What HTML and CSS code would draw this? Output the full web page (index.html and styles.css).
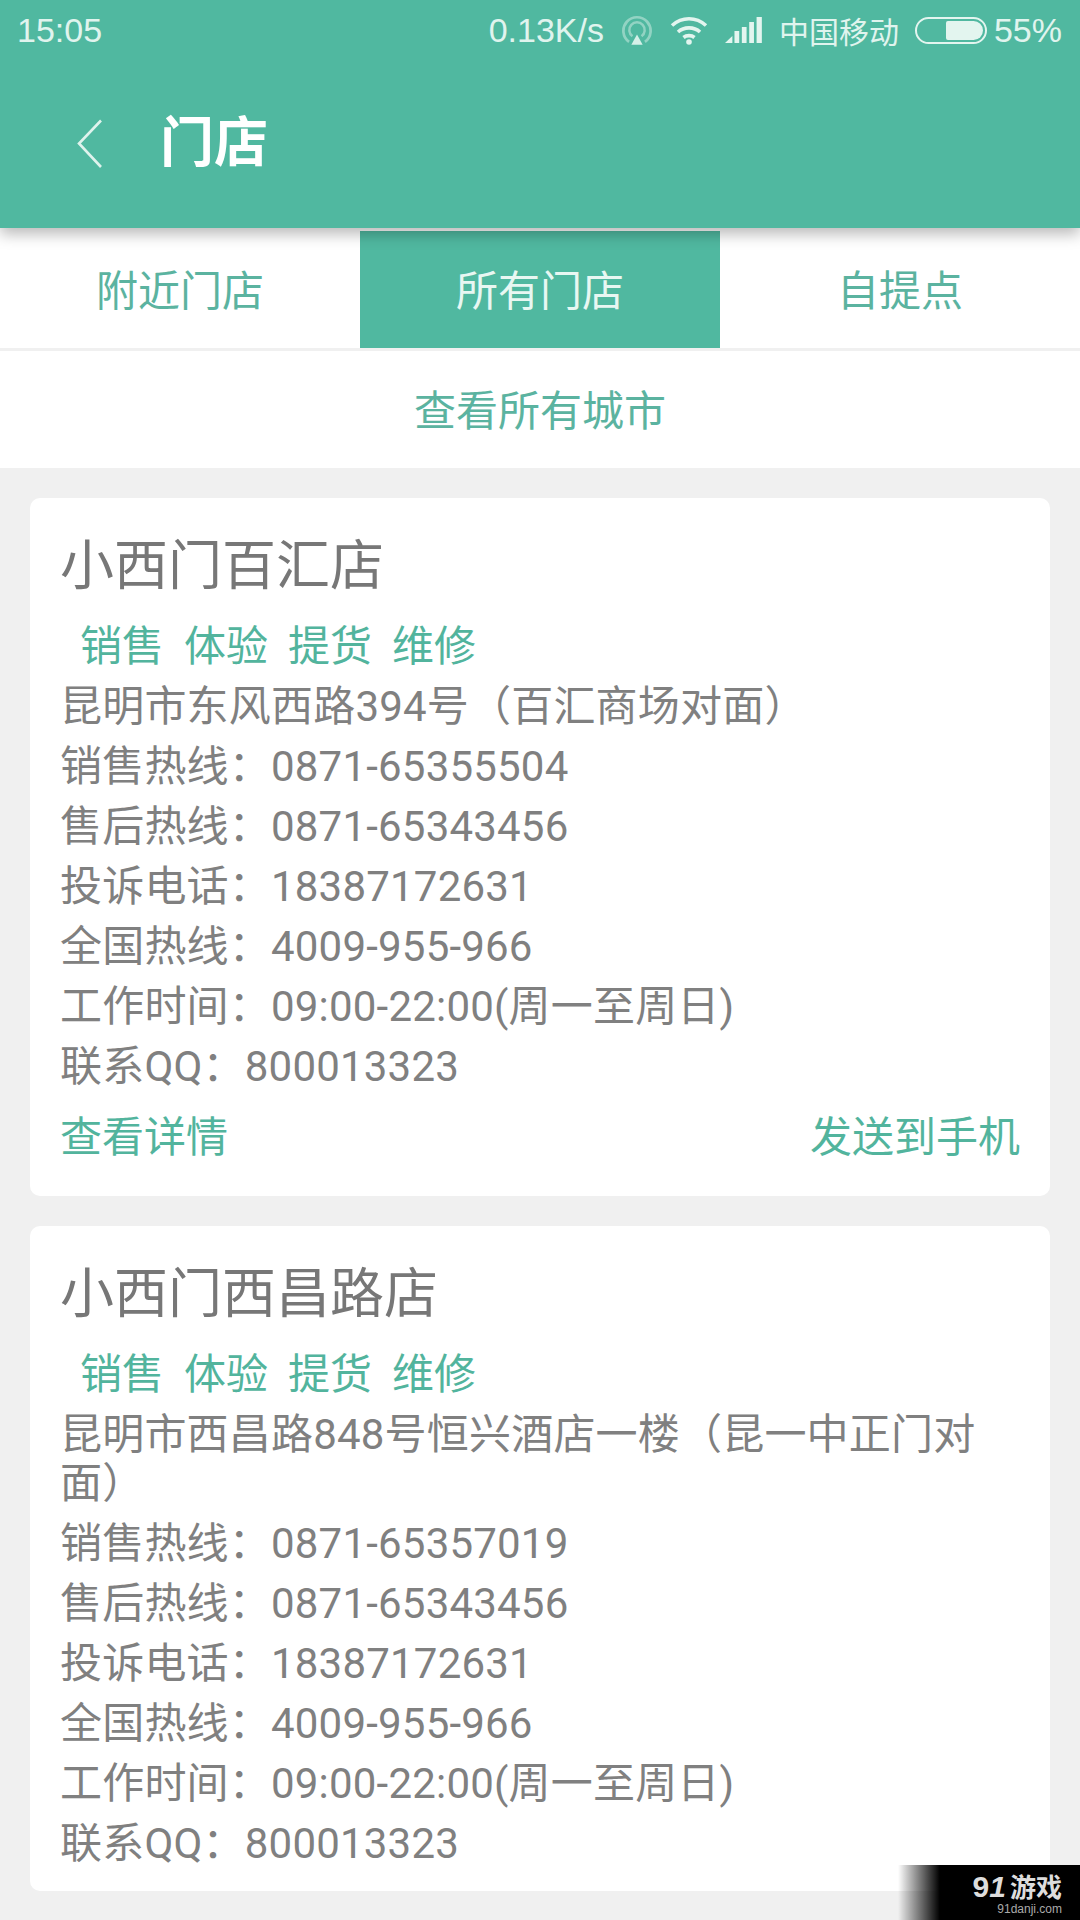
FILE: index.html
```html
<!DOCTYPE html>
<html lang="zh-CN">
<head>
<meta charset="utf-8">
<title>门店</title>
<link rel="stylesheet" href="styles.css">
</head>
<body>
<div class="page">
  <header class="appbar">
    <div class="status">
      <span class="time">15:05</span>
      <div class="status-right">
        <span class="speed">0.13K/s</span>
        <svg class="ic-hotspot" width="30" height="34" viewBox="0 0 26 30" fill="none" stroke="#b5e2d5" stroke-opacity=".65">
          <path d="M6 25.5A12 12 0 1 1 20 25.5" stroke-width="2.4"/>
          <path d="M9 20.5A6.8 6.8 0 1 1 17 20.5" stroke-width="2.2"/>
          <path d="M13 19l5 9H8z" fill="#d5f0e8" stroke="none"/>
        </svg>
        <svg class="ic-wifi" width="38" height="30" viewBox="0 0 38 30" fill="none" stroke="#e3f5ef" stroke-width="3.6">
          <path d="M2 10.5C12 1.500 26 1.500 36 10.500"/>
          <path d="M8 17C14 11.500 24 11.500 30 17"/>
          <path d="M13.500 22.500C16.500 20 21.500 20 24.500 22.500"/>
          <circle cx="19" cy="27" r="2.800" fill="#e3f5ef" stroke="none"/>
        </svg>
        <svg class="ic-signal" width="40" height="28" viewBox="0 0 38 28" fill="#e3f5ef" preserveAspectRatio="none">
          <path d="M0 27 7 20v7z"/>
          <rect x="9" y="15" width="4.500" height="12"/>
          <rect x="16" y="11" width="4.500" height="16"/>
          <rect x="23" y="6" width="4.500" height="21"/>
          <rect x="30" y="1" width="5" height="26"/>
        </svg>
        <span class="carrier">中国移动</span>
        <div class="battery"><div class="battery-fill"></div></div>
        <span class="percent">55%</span>
      </div>
    </div>
    <div class="titlebar">
      <svg class="back" width="26" height="50" viewBox="0 0 26 50" fill="none" stroke="#dff3ed" stroke-width="2.600">
        <path d="M24 1.500 2 24.500 24 48"/>
      </svg>
      <h1 class="title">门店</h1>
    </div>
  </header>

  <nav class="tabs">
    <div class="tab">附近门店</div>
    <div class="tab tab-active">所有门店</div>
    <div class="tab">自提点</div>
  </nav>
  <div class="city">查看所有城市</div>

  <main class="list">
    <section class="card">
      <h2 class="name">小西门百汇店</h2>
      <div class="tags"><span>销售</span><span>体验</span><span>提货</span><span>维修</span></div>
      <p class="row">昆明市东风西路394号（百汇商场对面）</p>
      <p class="row">销售热线：0871-65355504</p>
      <p class="row">售后热线：0871-65343456</p>
      <p class="row">投诉电话：18387172631</p>
      <p class="row">全国热线：4009-955-966</p>
      <p class="row">工作时间：09:00-22:00(周一至周日)</p>
      <p class="row">联系QQ：800013323</p>
      <div class="actions"><span>查看详情</span><span>发送到手机</span></div>
    </section>
    <section class="card">
      <h2 class="name">小西门西昌路店</h2>
      <div class="tags"><span>销售</span><span>体验</span><span>提货</span><span>维修</span></div>
      <p class="row">昆明市西昌路848号恒兴酒店一楼（昆一中正门对面）</p>
      <p class="row">销售热线：0871-65357019</p>
      <p class="row">售后热线：0871-65343456</p>
      <p class="row">投诉电话：18387172631</p>
      <p class="row">全国热线：4009-955-966</p>
      <p class="row">工作时间：09:00-22:00(周一至周日)</p>
      <p class="row">联系QQ：800013323</p>
    </section>
  </main>

  <div class="watermark">
    <div class="wm-logo"><b class="wm-num">9<i>1</i></b>游戏</div>
    <div class="wm-url">91danji.com</div>
  </div>
</div>
</body>
</html>
```

FILE: styles.css
```css
* { box-sizing: border-box; }
html, body { margin: 0; padding: 0; }
body {
  width: 1080px;
  height: 1920px;
  overflow: hidden;
  background: #f0f0f0;
  font-family: Roboto, "Noto Sans CJK SC", sans-serif;
}
.page {
  position: relative;
  width: 1080px;
  height: 1920px;
  overflow: hidden;
}

/* app bar */
.appbar {
  position: relative;
  z-index: 2;
  height: 228px;
  background: #50b8a0;
  box-shadow: 0 6px 14px rgba(0, 0, 0, .28);
}
.status {
  height: 60px;
  padding: 0 18px 0 17px;
  display: flex;
  align-items: center;
  justify-content: space-between;
  color: #e0f4ee;
  font-family: "Liberation Sans", "Noto Sans CJK SC", sans-serif;
  font-size: 34px;
}
.status-right {
  display: flex;
  align-items: center;
}
.ic-hotspot { margin-left: 18px; }
.ic-wifi { margin-left: 18px; }
.ic-signal { margin-left: 17px; }
.carrier { margin-left: 14px; font-size: 30px; }
.battery {
  margin-left: 16px;
  width: 72px;
  height: 27px;
  border: 2px solid #e3f5ef;
  border-radius: 14px;
  padding: 2px;
  display: flex;
  justify-content: flex-end;
}
.battery-fill {
  width: 37px;
  background: #e3f5ef;
  border-radius: 2px 10px 10px 2px;
}
.percent { margin-left: 7px; }
.titlebar {
  height: 168px;
  padding: 0 0 0 77px;
  display: flex;
  align-items: center;
}
.title {
  margin: 0 0 0 57px;
  color: #fff;
  font-size: 54px;
  font-weight: 700;
  line-height: 60px;
}

/* tabs */
.tabs {
  height: 123px;
  padding-top: 3px;
  display: flex;
  background: #fff;
  border-bottom: 3px solid #f0f0f0;
  align-items: stretch;
}
.tab {
  width: 360px;
  padding-bottom: 4px;
  display: flex;
  align-items: center;
  justify-content: center;
  color: #5bb3a0;
  font-size: 42px;
}
.tab-active {
  width: 360px;
  flex: 0 0 360px;
  background: #50b8a0;
  color: #e8f7f2;
}
.city {
  height: 117px;
  padding-bottom: 4px;
  display: flex;
  align-items: center;
  justify-content: center;
  background: #fff;
  color: #5bb3a0;
  font-size: 42px;
}

/* store list */
.list {
  padding: 30px 30px 0;
  display: flex;
  flex-direction: column;
  gap: 30px;
}
.card {
  padding: 36px 30px 23px;
  background: #fff;
  border-radius: 10px;
}
.name {
  margin: 0;
  color: #777;
  font-size: 54px;
  font-weight: 400;
  line-height: 66px;
}
.tags {
  height: 60px;
  margin-top: 12px;
  padding-left: 20px;
  display: flex;
  gap: 20px;
  align-items: center;
  color: #52b49d;
  font-size: 42px;
}
.row {
  margin: 11px 0 0;
  color: #808080;
  font-size: 42px;
  letter-spacing: .2px;
  line-height: 49px;
}
.tags + .row { margin-top: 10px; }
.actions {
  height: 60px;
  margin: 12px 0 10px;
  display: flex;
  align-items: center;
  justify-content: space-between;
  color: #52b49d;
  font-size: 42px;
}

/* watermark */
.watermark {
  position: absolute;
  right: 0;
  bottom: 0;
  width: 182px;
  height: 55px;
  padding: 6px 18px 0 0;
  background: linear-gradient(90deg, rgba(0, 0, 0, 0), #000 23%);
  text-align: right;
  color: #ddd;
}
.wm-logo {
  font-family: "Noto Sans CJK SC", sans-serif;
  font-size: 26px;
  font-weight: 700;
  line-height: 30px;
}
.wm-num {
  font-family: "Liberation Sans", sans-serif;
  font-size: 30px;
  margin-right: 4px;
}
.wm-num i { font-style: italic; }
.wm-url {
  font-family: "Liberation Sans", sans-serif;
  font-size: 12px;
  line-height: 14px;
  color: #aaa;
}
```
